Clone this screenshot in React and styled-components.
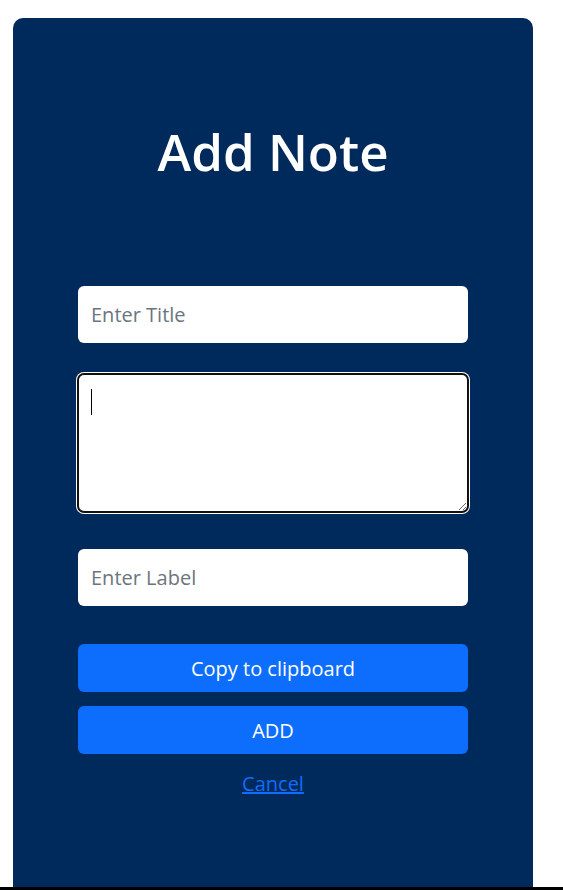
import React from "react";
import styled, { createGlobalStyle } from "styled-components";

const GlobalStyle = createGlobalStyle`
  body {
    margin: 0;
    background: #fff;
    font-family: "Open Sans", "Noto Sans", sans-serif;
  }
`;

const Page = styled.div`
  padding: 18px 0 0 13px;
`;

const Card = styled.div`
  width: 520px;
  height: 869px;
  box-sizing: border-box;
  background: #002a5c;
  border-radius: 10px 10px 0 0;
  padding: 103px 65px 0;
  display: flex;
  flex-direction: column;
`;

const Title = styled.h1`
  margin: 0 0 104px;
  text-align: center;
  color: #fff;
  font-size: 51px;
  font-weight: 600;
  line-height: 1.2;
`;

const Field = styled.input`
  box-sizing: border-box;
  width: 100%;
  height: 57px;
  margin-bottom: ${(p) => p.$gap}px;
  padding: 0 13px;
  border: none;
  border-radius: 6px;
  background: #fff;
  font-family: inherit;
  font-size: 20px;
  color: #212529;
  outline: none;
  &::placeholder {
    color: #6c757d;
  }
`;

const AreaWrap = styled.div`
  position: relative;
  margin: -1px -1px 36px;
  &::after {
    content: "";
    position: absolute;
    left: 14px;
    top: 16px;
    width: 1px;
    height: 26px;
    background: #000;
  }
`;

const Area = styled.textarea`
  display: block;
  box-sizing: border-box;
  width: 100%;
  height: 140px;
  padding: 12px 13px;
  border: 2px solid #111;
  border-radius: 7px;
  box-shadow: 0 0 0 1px #fff;
  background: #fff;
  font-family: inherit;
  font-size: 20px;
  outline: none;
`;

const Button = styled.button`
  width: 100%;
  height: 48px;
  margin-bottom: 14px;
  border: none;
  border-radius: 6px;
  background: #0d6efd;
  color: #fff;
  font-family: inherit;
  font-size: 20px;
  cursor: pointer;
`;

const CancelLink = styled.a`
  align-self: center;
  margin-top: 2px;
  color: #0d6efd;
  font-size: 20px;
  text-decoration: underline;
`;

const BottomBar = styled.div`
  height: 3px;
  background: #000;
`;

export default function App() {
  return (
    <>
      <GlobalStyle />
      <Page>
        <Card>
          <Title>Add Note</Title>
          <Field placeholder="Enter Title" $gap={31} />
          <AreaWrap>
            <Area />
          </AreaWrap>
          <Field placeholder="Enter Label" $gap={38} />
          <Button>Copy to clipboard</Button>
          <Button>ADD</Button>
          <CancelLink href="#">Cancel</CancelLink>
        </Card>
      </Page>
      <BottomBar />
    </>
  );
}
